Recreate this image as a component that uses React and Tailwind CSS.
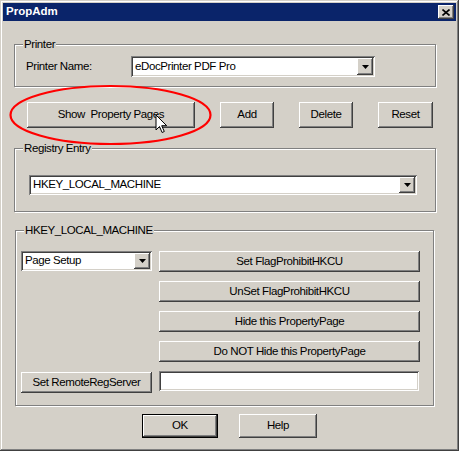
import React from "react";

const raised =
  "shadow-[inset_-1px_-1px_#404040,inset_1px_1px_#ffffff,inset_-2px_-2px_#808080]";
const sunken =
  "shadow-[inset_1px_1px_#808080,inset_-1px_-1px_#ffffff,inset_2px_2px_#404040,inset_-2px_-2px_#d4d0c8]";

function Btn({ children, className = "" }) {
  return (
    <button
      type="button"
      className={`flex items-center justify-center bg-[#d4d0c8] text-black leading-none ${raised} ${className}`}
    >
      {children}
    </button>
  );
}

function DropArrow() {
  return (
    <span
      className={`flex h-full w-[16px] shrink-0 items-center justify-center bg-[#d4d0c8] ${raised}`}
    >
      <svg width="7" height="4" viewBox="0 0 7 4">
        <path d="M0 0h7L3.5 4z" fill="#000" />
      </svg>
    </span>
  );
}

function Combo({ value, className = "" }) {
  return (
    <div className={`flex bg-white p-[2px] ${sunken} ${className}`}>
      <span className="flex flex-1 items-center pl-[2px] leading-none">{value}</span>
      <DropArrow />
    </div>
  );
}

function Group({ title, className = "", children }) {
  return (
    <div
      className={`relative border border-[#808080] shadow-[1px_1px_#ffffff,inset_1px_1px_#ffffff] ${className}`}
    >
      <span className="absolute left-[8px] top-[-8px] bg-[#d4d0c8] px-[1px] leading-[14px]">
        {title}
      </span>
      {children}
    </div>
  );
}

export default function App() {
  return (
    <div
      className="relative flex h-[451px] w-[459px] flex-col bg-[#d4d0c8] p-[3px] text-[11.5px] tracking-[-0.4px] text-black shadow-[inset_-1px_-1px_#404040,inset_1px_1px_#d4d0c8,inset_-2px_-2px_#808080,inset_2px_2px_#ffffff]"
      style={{ fontFamily: '"Liberation Sans", Arial, sans-serif' }}
    >
      {/* Title bar */}
      <div className="flex h-[18px] items-center justify-between bg-[#0a246a] pl-[3px] pr-[2px]">
        <span className="text-[11.5px] font-bold tracking-normal text-white">PropAdm</span>
        <span
          className={`flex h-[14px] w-[16px] items-center justify-center bg-[#d4d0c8] ${raised}`}
        >
          <svg width="8" height="7" viewBox="0 0 8 7">
            <path d="M0.5 0.5L7.5 6.5M7.5 0.5L0.5 6.5" stroke="#000" strokeWidth="1.6" />
          </svg>
        </span>
      </div>

      {/* Printer */}
      <Group title="Printer" className="ml-[11px] mt-[23px] h-[43px] w-[422px]">
        <div className="flex items-center pl-[11px] pt-[11px]">
          <span className="w-[105px]">Printer Name:</span>
          <Combo value="eDocPrinter PDF Pro" className="h-[21px] w-[244px]" />
        </div>
      </Group>

      {/* Button row */}
      <div className="ml-[24px] mt-[15px] flex gap-[25px]">
        <Btn className="h-[26px] w-[168px]">Show&nbsp; Property Pages</Btn>
        <Btn className="h-[26px] w-[54px]">Add</Btn>
        <Btn className="h-[26px] w-[54px]">Delete</Btn>
        <Btn className="h-[26px] w-[55px]">Reset</Btn>
      </div>

      {/* Registry Entry */}
      <Group title="Registry Entry" className="ml-[11px] mt-[20px] h-[64px] w-[422px]">
        <Combo value="HKEY_LOCAL_MACHINE" className="ml-[14px] mt-[26px] h-[20px] w-[388px]" />
      </Group>

      {/* HKEY_LOCAL_MACHINE */}
      <Group title="HKEY_LOCAL_MACHINE" className="ml-[12px] mt-[18px] h-[176px] w-[419px]">
        <div className="grid grid-cols-[131px_261px] auto-rows-[21px] gap-x-[7px] gap-y-[9px] pl-[5px] pt-[20px]">
          <Combo value="Page Setup" className="h-[20px]" />
          <Btn>Set FlagProhibitHKCU</Btn>
          <div />
          <Btn>UnSet FlagProhibitHKCU</Btn>
          <div />
          <Btn>Hide this PropertyPage</Btn>
          <div />
          <Btn>Do NOT Hide this PropertyPage</Btn>
          <Btn className="mt-[1px] h-[21px]">Set RemoteRegServer</Btn>
          <div className={`h-[20px] w-[260px] bg-white ${sunken}`} />
        </div>
      </Group>

      {/* OK / Help */}
      <div className="ml-[139px] mt-[8px] flex gap-[21px]">
        <div className="h-[24px] w-[76px] border border-black">
          <Btn className="h-full w-full">OK</Btn>
        </div>
        <Btn className="h-[24px] w-[78px]">Help</Btn>
      </div>

      {/* Annotation ellipse + cursor */}
      <svg
        className="pointer-events-none absolute left-0 top-0"
        width="459"
        height="451"
        viewBox="0 0 459 451"
      >
        <ellipse cx="110.5" cy="115" rx="100" ry="29" fill="none" stroke="#ff0000" strokeWidth="2.2" />
        <path
          d="M156 115v15l3.5-3.5 2.6 6 2.2-1-2.6-5.8h5z"
          fill="#ffffff"
          stroke="#000000"
          strokeWidth="1"
          strokeLinejoin="miter"
        />
      </svg>
    </div>
  );
}
